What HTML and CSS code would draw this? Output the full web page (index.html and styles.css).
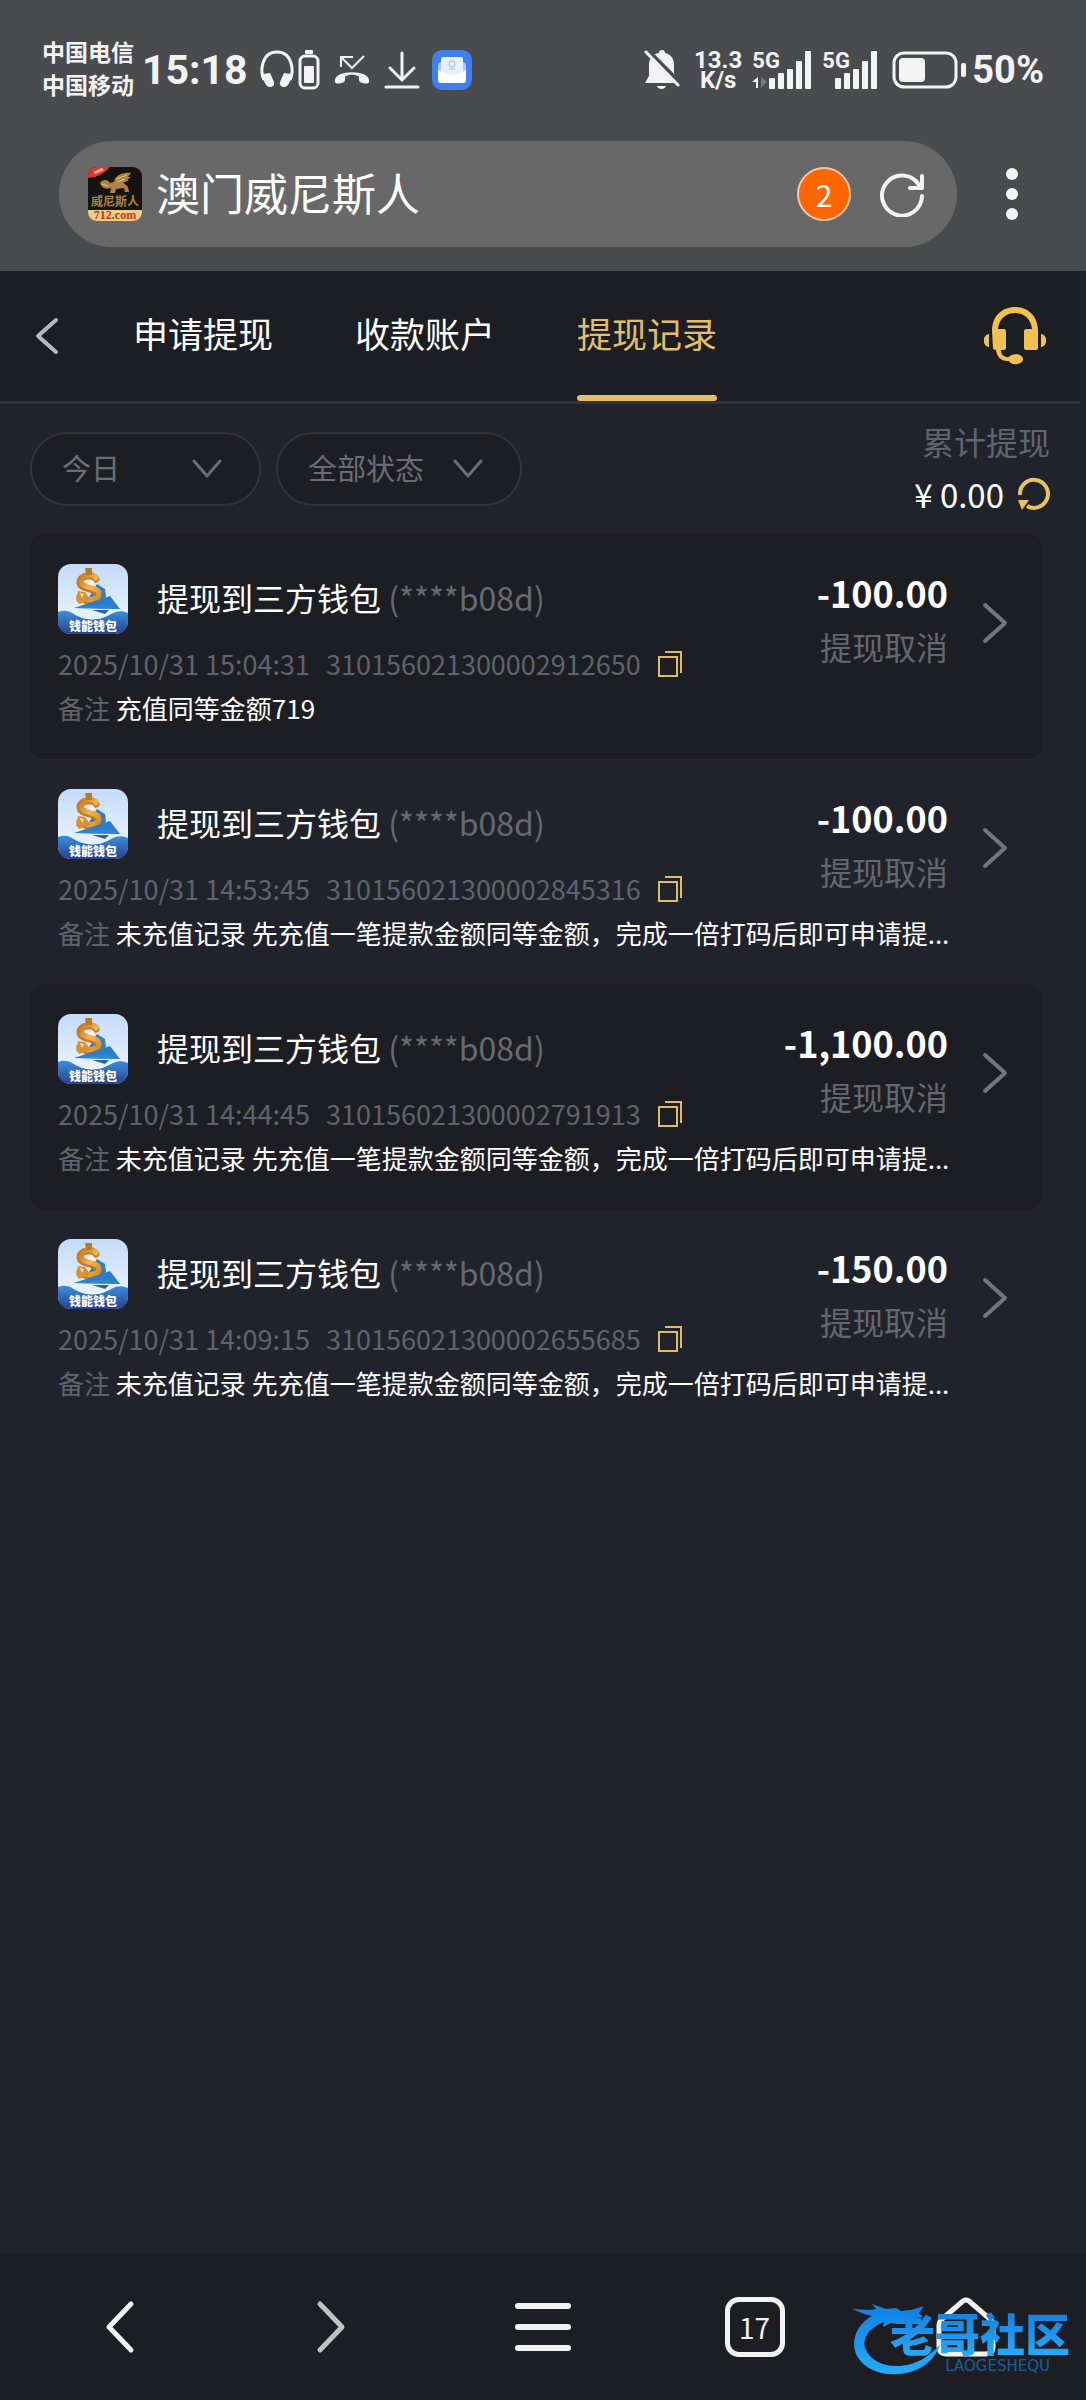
FILE: index.html
```html
<!DOCTYPE html>
<html lang="zh-CN">
<head>
  <meta charset="UTF-8" />
  <meta name="viewport" content="width=device-width, initial-scale=1.0" />
  <title>提现记录</title>
  <link rel="stylesheet" href="styles.css">
</head>
<body>
  <!-- 卡片里重复用到的图标 -->
  <svg class="sprite" aria-hidden="true">
    <defs>
      <linearGradient id="sky" x1="0" y1="0" x2="0" y2="1">
        <stop offset="0" stop-color="#c3dbfb" />
        <stop offset="1" stop-color="#f4f9ff" />
      </linearGradient>
      <linearGradient id="sea" x1="0" y1="0" x2="0" y2="1">
        <stop offset="0" stop-color="#3b8fdc" />
        <stop offset="1" stop-color="#28418f" />
      </linearGradient>
      <linearGradient id="coin" x1="0" y1="0" x2="1" y2="1">
        <stop offset="0" stop-color="#c97a1c" />
        <stop offset="0.5" stop-color="#f3b851" />
        <stop offset="1" stop-color="#d98b25" />
      </linearGradient>
      <linearGradient id="dragon" x1="0" y1="0" x2="0" y2="1">
        <stop offset="0" stop-color="#127fe0" />
        <stop offset="1" stop-color="#27aaf8" />
      </linearGradient>
    </defs>
    <symbol id="wallet" viewBox="0 0 70 70">
      <rect width="70" height="70" rx="13" fill="url(#sky)" />
      <path d="M39 20l8 5 1 8-10 6-8-4z" fill="#2f7fc6" />
      <path d="M38 15c-3-5-16-4-16 3 0 9 18 5 18 13 0 6-13 8-18 2" fill="none" stroke="#c47a20" stroke-width="7" stroke-linecap="round" />
      <path d="M38 14c-3-5-15-4-15 3 0 8 18 5 18 13 0 6-13 8-17 2" fill="none" stroke="url(#coin)" stroke-width="5" stroke-linecap="round" />
      <path d="M20 27l-2 9 3 4 12-4-6-8z" fill="#d89235" />
      <path d="M22 29l4 1-2 4z" fill="#fbe3ad" />
      <path d="M27 4h7v7h-6z" fill="#b87a2c" />
      <path d="M29 20l6-4 2 6z" fill="#fff3d8" />
      <path d="M16 44l36-12 10 13z" fill="#2b7cc9" />
      <path d="M16 44l32-4 14 5z" fill="#2f86d3" />
      <path d="M34 46h17l-4 4z" fill="#2a62ae" />
      <path d="M0 48c8-3 12 0 18 3 10 5 23 6 33 0 7-4 12-5 19-2v8c0 8-5 13-13 13H13C5 70 0 65 0 57z" fill="url(#sea)" />
      <path d="M14 49c12 7 27 7 40 0-12 8-27 9-40 0z" fill="#fff" />
      <text x="35" y="67" class="wallet-text">钱能钱包</text>
    </symbol>
    <symbol id="copy" viewBox="0 0 26 28">
      <path d="M2 7h18v19H2zM8 2h16v21" fill="none" stroke="currentColor" stroke-width="2" />
    </symbol>
    <symbol id="arrow-down" viewBox="0 0 32 22">
      <path d="M3 3l13 15L29 3" fill="none" stroke="currentColor" stroke-width="3" stroke-linecap="round" stroke-linejoin="round" />
    </symbol>
    <symbol id="arrow-right" viewBox="0 0 26 42">
      <path d="M3 3l20 18L3 39" fill="none" stroke="currentColor" stroke-width="4" stroke-linecap="round" stroke-linejoin="round" />
    </symbol>
  </svg>

  <!-- 系统状态栏 + 地址栏 -->
  <header class="browser-top">
    <div class="status-bar">
      <div class="status-group">
        <div class="carrier">
          <div>中国电信</div>
          <div>中国移动</div>
        </div>
        <span class="clock">15:18</span>
        <div class="status-icons">
          <svg width="34" height="38" viewBox="0 0 34 38" fill="none" stroke="#f3f3f3">
            <path d="M4 30C0 22 1 2 17 2s17 20 13 28" stroke-width="3" />
            <path d="M3 24l7-1 4 9c1 5-4 6-7 4-3-3-4-7-4-12zM31 24l-7-1-4 9c-1 5 4 6 7 4 3-3 4-7 4-12z" fill="#f3f3f3" stroke="none" />
          </svg>
          <svg width="22" height="40" viewBox="0 0 22 40">
            <rect x="7" y="0" width="8" height="4" rx="1" fill="#f3f3f3" />
            <rect x="2" y="6" width="18" height="32" rx="5" fill="none" stroke="#f3f3f3" stroke-width="3" />
            <rect x="6" y="16" width="10" height="17" rx="1" fill="#f3f3f3" />
          </svg>
        </div>
        <svg class="icon-call" width="36" height="30" viewBox="0 0 36 30" fill="none" stroke="#f3f3f3" stroke-width="2">
          <path d="M30 1L18 13 7 2M7 12V2h12" />
          <path d="M1 27c-3-13 37-13 34 0-1 3-7 1-9 0-2-2 0-5-2-6-4-2-8-2-12 0-2 1 0 4-2 6-2 1-8 3-9 0z" fill="#f3f3f3" stroke="none" />
        </svg>
        <svg class="icon-download" width="36" height="38" viewBox="0 0 36 38" fill="none" stroke="#f3f3f3" stroke-width="3" stroke-linecap="round">
          <path d="M18 2v26M6 17l12 12 12-12M2 36h32" />
        </svg>
        <svg class="icon-mail" width="40" height="40" viewBox="0 0 40 40">
          <rect width="40" height="40" rx="10" fill="#3f80ee" />
          <rect x="6" y="12" width="28" height="18" rx="4" fill="#a9c9fb" />
          <rect x="9" y="7" width="22" height="20" rx="2" fill="#e6efff" />
          <path d="M6 20c9 6 19 6 28 0v10c0 2-1 3-3 3H9c-2 0-3-1-3-3z" fill="#fff" />
          <circle cx="20" cy="14" r="3" fill="none" stroke="#9cbcf0" />
          <path d="M17 19h6" stroke="#9cbcf0" />
        </svg>
      </div>
      <div class="status-group">
        <svg class="icon-bell" width="36" height="40" viewBox="0 0 36 40">
          <path d="M18 0c2 0 3 1 3 3 6 1 9 6 9 12v8l4 7v3H1l4-7V15c0-6 3-11 10-12 0-2 1-3 3-3zM13 36h9c-1 4-8 4-9 0z" fill="#f3f3f3" />
          <path d="M4 2l31 31" stroke="#4a4b4e" stroke-width="6" />
          <path d="M2 2l32 33" stroke="#f3f3f3" stroke-width="3" stroke-linecap="round" />
        </svg>
        <div class="speed">
          <div>13.3</div>
          <div>K/s</div>
        </div>
        <div class="signal signal-data">
          <span>5G</span>
          <svg width="60" height="38" viewBox="0 0 60 38" fill="#f3f3f3">
            <path d="M6 26v11H4v-6H0z" />
            <path d="M9 26v11l6-6z" fill="#77787a" />
            <rect x="17" y="27" width="6" height="11" rx="1" /><rect x="26" y="22" width="6" height="16" rx="1" /><rect x="35" y="18" width="6" height="20" rx="1" /><rect x="44" y="10" width="6" height="28" rx="1" /><rect x="53" y="0" width="6" height="38" rx="1" />
          </svg>
        </div>
        <div class="signal">
          <span>5G</span>
          <svg width="56" height="38" viewBox="0 0 56 38" fill="#f3f3f3">
            <rect x="13" y="27" width="6" height="11" rx="1" /><rect x="22" y="22" width="6" height="16" rx="1" /><rect x="31" y="18" width="6" height="20" rx="1" /><rect x="40" y="10" width="6" height="28" rx="1" /><rect x="49" y="0" width="6" height="38" rx="1" />
          </svg>
        </div>
        <svg class="icon-battery" width="74" height="38" viewBox="0 0 74 38">
          <rect x="2" y="2" width="62" height="34" rx="10" fill="none" stroke="#f3f3f3" stroke-width="3" />
          <rect x="7" y="7" width="26" height="24" rx="4" fill="#f3f3f3" />
          <rect x="69" y="12" width="5" height="14" rx="2" fill="#f3f3f3" />
        </svg>
        <span class="percent">50%</span>
      </div>
    </div>

    <div class="address-row">
      <div class="address-bar">
        <svg width="54" height="54" viewBox="0 0 54 54">
          <rect width="54" height="54" rx="9" fill="#15130f" />
          <path d="M0 9C0 4 4 0 9 0h13Q14 10 0 11z" fill="#df3527" />
          <path d="M6 6l9-4" stroke="#f7a79e" stroke-width="3" />
          <path d="M12 16c2-4 8-4 10 0l4-1c1-5 6-10 17-9l-3 4h3l-4 3h2l-6 3c3 1 6 4 6 9h-4l-1-4-8 1-1 4h-5l1-5c-6 2-10-1-11-5z" fill="#ad8241" />
          <path d="M28 12l11-4M29 15l8-3M14 17l6 2" stroke="#e5c27f" fill="none" />
          <text x="27" y="39" class="fav-name">威尼斯人</text>
          <path d="M0 43h54v2c0 5-4 9-9 9H9c-5 0-9-4-9-9z" fill="#f0cf88" />
          <text x="27" y="52" class="fav-url">712.com</text>
        </svg>
        <span class="site-title">澳门威尼斯人</span>
        <button class="badge" aria-label="提示">2</button>
        <button class="icon-btn" aria-label="刷新">
          <svg width="46" height="46" viewBox="0 0 46 46" fill="none" stroke="#f3f3f3" stroke-width="4" stroke-linecap="round" stroke-linejoin="round">
            <path d="M43 25A20 20 0 1 1 40 14L43 17M43 5v12H31" />
          </svg>
        </button>
      </div>
      <button class="icon-btn" aria-label="更多">
        <svg width="14" height="54" viewBox="0 0 14 54" fill="#f3f3f3">
          <circle cx="7" cy="7" r="6" /><circle cx="7" cy="27" r="6" /><circle cx="7" cy="47" r="6" />
        </svg>
      </button>
    </div>
  </header>

  <main class="page">
    <nav class="tabs">
      <button class="icon-btn back" aria-label="返回">
        <svg width="24" height="38" viewBox="0 0 24 38" fill="none" stroke="#b4b7c1" stroke-width="4" stroke-linecap="round" stroke-linejoin="round">
          <path d="M21 3L3 19l18 16" />
        </svg>
      </button>
      <a class="tab" href="#">申请提现</a>
      <a class="tab" href="#">收款账户</a>
      <a class="tab active" href="#">提现记录</a>
      <button class="icon-btn service" aria-label="客服">
        <svg width="62" height="58" viewBox="0 0 62 58" fill="#f0c150">
          <path d="M8 24C8 9 18 0 31 0s23 9 23 24v17c0 1-1 2-2 2H42c-1 0-2-1-2-2V24c0-1 1-2 2-2h6C47 12 40 6 31 6s-16 6-17 16h6c1 0 2 1 2 2v17c0 1-1 2-2 2h-3c0 5 3 7 7 7h1c2-4 14-4 14 2s-12 7-14 2h-2c-6 0-10-4-11-11-2 0-3-1-3-2z" />
          <path d="M5 27v13c-7-1-7-12 0-13zM57 27v13c7-1 7-12 0-13z" />
        </svg>
      </button>
    </nav>

    <section class="filters">
      <div class="filter filter-day">
        <select aria-label="日期">
          <option>今日</option>
          <option>昨日</option>
        </select>
        <svg width="32" height="22"><use href="#arrow-down" /></svg>
      </div>
      <div class="filter filter-state">
        <select aria-label="状态">
          <option>全部状态</option>
          <option>提现取消</option>
        </select>
        <svg width="32" height="22"><use href="#arrow-down" /></svg>
      </div>
      <div class="total">
        <div class="total-label">累计提现</div>
        <div class="total-value">
          <span>¥ 0.00</span>
          <button class="icon-btn" aria-label="刷新累计">
            <svg width="32" height="34" viewBox="0 0 32 34">
              <path d="M2 18A14 14 0 1 1 9 29" fill="none" stroke="#e9c262" stroke-width="4" />
              <path d="M0 23h11L4 33z" fill="#e9c262" />
            </svg>
          </button>
        </div>
      </div>
    </section>

    <ul class="records">
      <li class="record">
        <div class="info">
          <div class="name-row">
            <svg width="70" height="70"><use href="#wallet" /></svg>
            <span class="name">提现到三方钱包 <small>(****b08d)</small></span>
          </div>
          <div class="meta">
            <span>2025/10/31 15:04:31</span>
            <span>310156021300002912650</span>
            <button class="icon-btn copy" aria-label="复制"><svg width="26" height="28"><use href="#copy" /></svg></button>
          </div>
        </div>
        <div class="amount">
          <strong>-100.00</strong>
          <span>提现取消</span>
        </div>
        <svg class="more" width="26" height="42"><use href="#arrow-right" /></svg>
        <p class="note"><span>备注</span> 充值同等金额719</p>
      </li>
      <li class="record">
        <div class="info">
          <div class="name-row">
            <svg width="70" height="70"><use href="#wallet" /></svg>
            <span class="name">提现到三方钱包 <small>(****b08d)</small></span>
          </div>
          <div class="meta">
            <span>2025/10/31 14:53:45</span>
            <span>310156021300002845316</span>
            <button class="icon-btn copy" aria-label="复制"><svg width="26" height="28"><use href="#copy" /></svg></button>
          </div>
        </div>
        <div class="amount">
          <strong>-100.00</strong>
          <span>提现取消</span>
        </div>
        <svg class="more" width="26" height="42"><use href="#arrow-right" /></svg>
        <p class="note"><span>备注</span> 未充值记录 先充值一笔提款金额同等金额，完成一倍打码后即可申请提...</p>
      </li>
      <li class="record">
        <div class="info">
          <div class="name-row">
            <svg width="70" height="70"><use href="#wallet" /></svg>
            <span class="name">提现到三方钱包 <small>(****b08d)</small></span>
          </div>
          <div class="meta">
            <span>2025/10/31 14:44:45</span>
            <span>310156021300002791913</span>
            <button class="icon-btn copy" aria-label="复制"><svg width="26" height="28"><use href="#copy" /></svg></button>
          </div>
        </div>
        <div class="amount">
          <strong>-1,100.00</strong>
          <span>提现取消</span>
        </div>
        <svg class="more" width="26" height="42"><use href="#arrow-right" /></svg>
        <p class="note"><span>备注</span> 未充值记录 先充值一笔提款金额同等金额，完成一倍打码后即可申请提...</p>
      </li>
      <li class="record">
        <div class="info">
          <div class="name-row">
            <svg width="70" height="70"><use href="#wallet" /></svg>
            <span class="name">提现到三方钱包 <small>(****b08d)</small></span>
          </div>
          <div class="meta">
            <span>2025/10/31 14:09:15</span>
            <span>310156021300002655685</span>
            <button class="icon-btn copy" aria-label="复制"><svg width="26" height="28"><use href="#copy" /></svg></button>
          </div>
        </div>
        <div class="amount">
          <strong>-150.00</strong>
          <span>提现取消</span>
        </div>
        <svg class="more" width="26" height="42"><use href="#arrow-right" /></svg>
        <p class="note"><span>备注</span> 未充值记录 先充值一笔提款金额同等金额，完成一倍打码后即可申请提...</p>
      </li>
    </ul>
  </main>

  <!-- 底部工具栏 -->
  <footer class="toolbar">
    <button class="icon-btn" aria-label="后退">
      <svg width="30" height="54" viewBox="0 0 30 54" fill="none" stroke="#f3f3f3" stroke-width="5" stroke-linecap="round" stroke-linejoin="round"><path d="M26 4L4 27l22 23" /></svg>
    </button>
    <button class="icon-btn" aria-label="前进">
      <svg width="30" height="54" viewBox="0 0 30 54" fill="none" stroke="#c2c2c2" stroke-width="5" stroke-linecap="round" stroke-linejoin="round"><path d="M4 4l22 23L4 50" /></svg>
    </button>
    <button class="icon-btn" aria-label="菜单">
      <svg width="56" height="48" viewBox="0 0 56 48" stroke="#f3f3f3" stroke-width="6" stroke-linecap="round"><path d="M3 3h50M3 24h50M3 45h50" /></svg>
    </button>
    <button class="tab-count" aria-label="标签页">17</button>
    <button class="icon-btn" aria-label="主页">
      <svg width="60" height="60" viewBox="0 0 60 60" fill="none" stroke="#f3f3f3" stroke-width="5" stroke-linejoin="round"><path d="M27 4Q30 2 33 4L55 23Q57 25 57 28V49Q57 57 49 57H11Q3 57 3 49V28Q3 25 5 23z" /></svg>
    </button>
    <div class="watermark">
      <svg width="92" height="72" viewBox="0 0 92 72" fill="url(#dragon)">
        <path d="M0 5l18 1 6-1-4-5 14 5 10-1 5 3 10-1 13-4-5 7 4 4-9 1 8 3-13 2-4-2-8 3-6-1-8 4 1-5C16 24 9 36 14 46c8 18 40 23 64 4l10-9c-4 12-13 20-24 25C42 75 15 70 5 52-2 38 4 21 20 12l-8-2z" />
      </svg>
      <div class="watermark-text">
        <b>老哥社区</b>
        <i>LAOGESHEQU</i>
      </div>
    </div>
  </footer>
</body>
</html>
```
FILE: styles.css
```css
* {
  box-sizing: border-box;
}
body {
  margin: 0;
  min-height: 100vh;
  display: flex;
  flex-direction: column;
  background: #20232b;
  color: #fff;
  font-family: "Noto Sans CJK SC", sans-serif;
}
button, select {
  font-family: inherit;
  border: none;
  background: none;
  padding: 0;
  cursor: pointer;
}
svg {
  display: block;
  flex-shrink: 0;
}
.sprite {
  position: absolute;
  width: 0;
  height: 0;
}
.icon-btn {
  display: flex;
  align-items: center;
  justify-content: center;
}

/* 状态栏 */
.browser-top {
  background: #4a4b4e;
  padding-bottom: 24px;
}
.status-bar {
  display: flex;
  justify-content: space-between;
  padding: 36px 42px 0;
  color: #f3f3f3;
}
.status-group {
  display: flex;
  align-items: center;
  height: 68px;
}
.carrier {
  padding-bottom: 4px;
  font-size: 23px;
  line-height: 33px;
  font-weight: bold;
}
.clock, .percent {
  font-family: Roboto, sans-serif;
  font-weight: bold;
}
.clock {
  margin-left: 8px;
  font-size: 41px;
}
.percent {
  margin-left: 6px;
  font-size: 38px;
}
.status-icons {
  display: flex;
  gap: 4px;
  margin-left: 12px;
}
.icon-call {
  margin-left: 14px;
}
.icon-download {
  margin-left: 14px;
}
.icon-mail {
  margin-left: 12px;
}
.speed {
  font-family: Roboto, sans-serif;
  font-weight: bold;
  font-size: 24px;
  line-height: 20px;
  text-align: center;
  margin: 0 10px 0 14px;
}
.signal {
  display: grid;
  margin-right: 14px;
}
.signal-data {
  margin-right: 10px;
}
.signal span, .signal svg {
  grid-area: 1 / 1;
}
.signal span {
  font-family: Roboto, sans-serif;
  font-weight: bold;
  font-size: 22px;
  line-height: 20px;
}

/* 地址栏 */
.address-row {
  display: flex;
  align-items: center;
  margin-top: 37px;
  padding: 0 67px 0 59px;
  gap: 48px;
}
.address-bar {
  flex: 1;
  display: flex;
  align-items: center;
  height: 106px;
  padding: 0 32px 0 29px;
  border-radius: 53px;
  background: #686868;
}
.site-title {
  flex: 1;
  margin-left: 14px;
  padding-bottom: 4px;
  font-size: 44px;
  line-height: 60px;
}
.badge {
  width: 54px;
  height: 54px;
  margin-right: 28px;
  border: 2px solid #f3c9ae;
  border-radius: 50%;
  background: #ff6600;
  color: #fff;
  font-size: 30px;
  line-height: 46px;
}
.fav-name {
  font-size: 12px;
  font-weight: bold;
  fill: #a9843c;
  text-anchor: middle;
}
.fav-url {
  font-family: "Liberation Serif", serif;
  font-size: 12px;
  font-weight: bold;
  fill: #c4331c;
  text-anchor: middle;
}
.wallet-text {
  font-size: 12px;
  font-weight: 900;
  fill: #fff;
  text-anchor: middle;
}

/* 页面标签 */
.page {
  flex: 1;
}
.tabs {
  display: flex;
  height: 133px;
  margin-right: 6px;
  padding: 0 34px 0 35px;
  background: #1d1e23;
  border-bottom: 3px solid #30323c;
}
.back {
  margin-right: 74px;
}
.tab {
  position: relative;
  display: flex;
  align-items: center;
  margin-right: 82px;
  padding-bottom: 8px;
  color: #fff;
  font-size: 35px;
  text-decoration: none;
}
.tab.active {
  color: #e4bf6b;
}
.tab.active::after {
  content: "";
  position: absolute;
  left: 0;
  right: 0;
  bottom: 0;
  height: 6px;
  border-radius: 3px;
  background: #e4bf6b;
}
.service {
  margin-left: auto;
}

/* 筛选 */
.filters {
  display: flex;
  gap: 15px;
  padding: 15px 36px 0 30px;
}
.filter {
  display: flex;
  align-items: center;
  height: 74px;
  margin-top: 13px;
  padding: 0 36px 0 30px;
  border: 2px solid #2f343d;
  border-radius: 37px;
  background: #1d1e23;
  color: #6a6d75;
}
.filter-day {
  width: 231px;
}
.filter-state {
  width: 246px;
}
.filter select {
  flex: 1;
  min-width: 0;
  padding-bottom: 4px;
  appearance: none;
  color: #6a6d75;
  font-size: 29px;
}
.total {
  margin-left: auto;
  text-align: right;
}
.total-label {
  color: #61646f;
  font-size: 32px;
  line-height: 44px;
}
.total-value {
  display: flex;
  align-items: center;
  justify-content: flex-end;
  gap: 14px;
  font-size: 33px;
  line-height: 62px;
}

/* 记录列表 */
.records {
  margin: 9px 44px 0 30px;
  padding: 0;
  list-style: none;
}
.record {
  display: grid;
  grid-template-columns: 1fr auto auto;
  align-items: start;
  align-content: start;
  padding: 30px 34px 31px 28px;
  border-radius: 14px;
}
.record:nth-child(odd) {
  background: #1d1e23;
}
.name-row {
  display: flex;
  align-items: center;
  gap: 29px;
}
.name {
  padding-bottom: 4px;
  font-size: 32px;
  line-height: 66px;
  white-space: nowrap;
}
.name small {
  color: #666970;
  font-size: 32px;
}
.meta {
  display: flex;
  align-items: center;
  gap: 16px;
  color: #5f636d;
  font-size: 27px;
  line-height: 30px;
  margin-top: 15px;
}
.copy {
  color: #e0bb62;
}
.amount {
  display: flex;
  flex-direction: column;
  align-items: flex-end;
  padding-top: 4px;
}
.amount strong {
  font-size: 36px;
  line-height: 48px;
}
.amount span {
  color: #636770;
  font-size: 32px;
  line-height: 60px;
}
.more {
  margin: 38px 0 0 34px;
  color: #73767d;
}
.note {
  grid-column: 1 / -1;
  margin: 0;
  font-size: 26px;
  line-height: 40px;
  padding-top: 9px;
  white-space: nowrap;
}
.note span {
  color: #5f636d;
}

/* 底部工具栏 */
.toolbar {
  position: relative;
  display: grid;
  grid-template-columns: repeat(5, 1fr);
  align-items: center;
  justify-items: center;
  height: 147px;
  padding: 0 14px;
  background: #1d1e23;
}
.tab-count {
  width: 60px;
  height: 60px;
  border: 5px solid #f3f3f3;
  border-radius: 14px;
  color: #f3f3f3;
  font-size: 28px;
  line-height: 46px;
}
.watermark {
  position: absolute;
  right: 16px;
  bottom: 24px;
  display: flex;
  align-items: flex-end;
  pointer-events: none;
}
.watermark-text {
  margin-left: -54px;
  display: flex;
  flex-direction: column;
  align-items: flex-end;
}
.watermark-text b {
  font-size: 45px;
  font-weight: 900;
  line-height: 46px;
  background: linear-gradient(#127fe0, #27aaf8);
  background-clip: text;
  color: transparent;
}
.watermark-text i {
  margin-right: 20px;
  font-family: "DejaVu Sans", sans-serif;
  font-style: normal;
  font-size: 15px;
  line-height: 20px;
  color: #1d5f94;
}
```
